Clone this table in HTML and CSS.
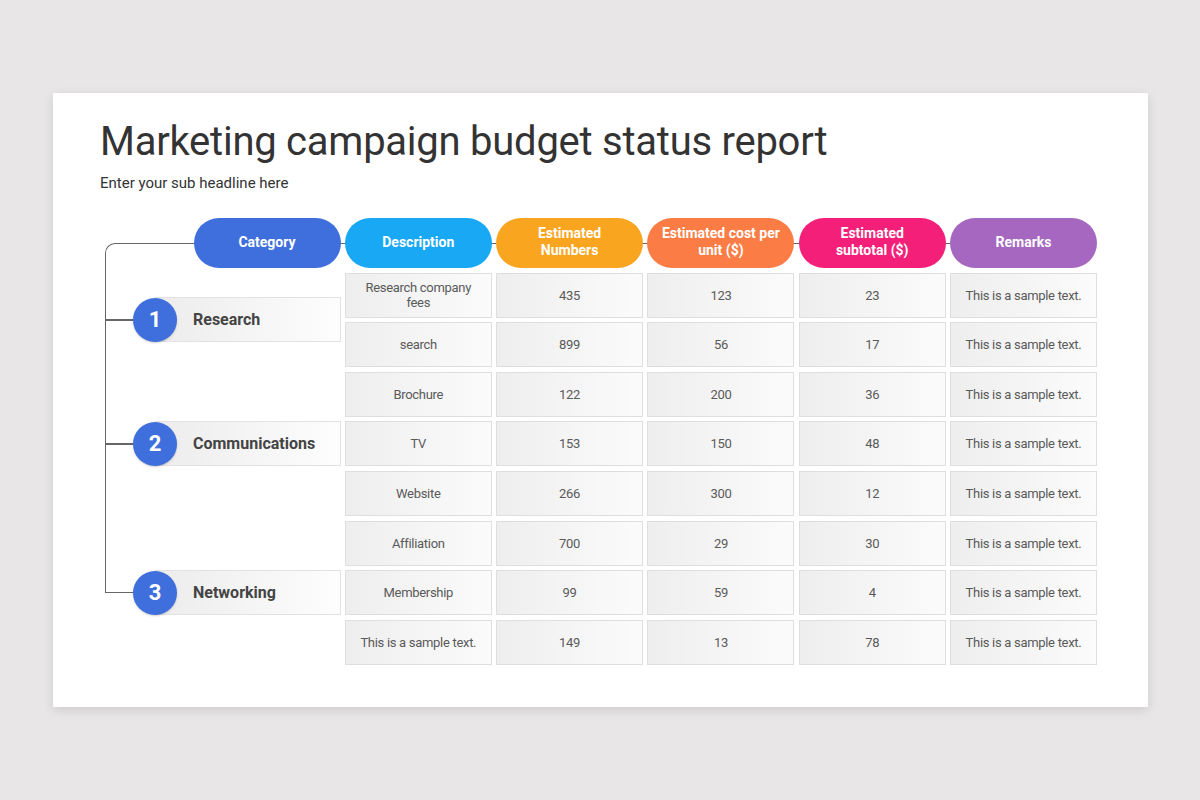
FILE: index.html
```html
<!DOCTYPE html>
<html>
<head>
<meta charset="utf-8">
<link rel="stylesheet" href="styles.css">
</head>
<body>
<div class="slide">
  <h1 class="title">Marketing campaign budget status report</h1>
  <p class="sub">Enter your sub headline here</p>
  <div class="board">
    <div class="bracket"></div>
    <div class="pill cat-pill c1">Category</div>
    <div class="pill c2">Description</div>
    <div class="pill c3">Estimated<br>Numbers</div>
    <div class="pill c4">Estimated cost per<br>unit ($)</div>
    <div class="pill c5">Estimated<br>subtotal ($)</div>
    <div class="pill c6">Remarks</div>

    <div class="cat r-research"><span class="num">1</span><span class="cat-box">Research</span></div>
    <div class="cat r-comm"><span class="num">2</span><span class="cat-box">Communications</span></div>
    <div class="cat r-net"><span class="num">3</span><span class="cat-box">Networking</span></div>

    <div class="cell d r1">Research company<br>fees</div><div class="cell r1">435</div><div class="cell r1">123</div><div class="cell r1">23</div><div class="cell r1">This is a sample text.</div>
    <div class="cell d r2">search</div><div class="cell r2">899</div><div class="cell r2">56</div><div class="cell r2">17</div><div class="cell r2">This is a sample text.</div>
    <div class="cell d r3">Brochure</div><div class="cell r3">122</div><div class="cell r3">200</div><div class="cell r3">36</div><div class="cell r3">This is a sample text.</div>
    <div class="cell d r4">TV</div><div class="cell r4">153</div><div class="cell r4">150</div><div class="cell r4">48</div><div class="cell r4">This is a sample text.</div>
    <div class="cell d r5">Website</div><div class="cell r5">266</div><div class="cell r5">300</div><div class="cell r5">12</div><div class="cell r5">This is a sample text.</div>
    <div class="cell d r6">Affiliation</div><div class="cell r6">700</div><div class="cell r6">29</div><div class="cell r6">30</div><div class="cell r6">This is a sample text.</div>
    <div class="cell d r7">Membership</div><div class="cell r7">99</div><div class="cell r7">59</div><div class="cell r7">4</div><div class="cell r7">This is a sample text.</div>
    <div class="cell d r8">This is a sample text.</div><div class="cell r8">149</div><div class="cell r8">13</div><div class="cell r8">78</div><div class="cell r8">This is a sample text.</div>
  </div>
</div>
</body>
</html>
```

FILE: styles.css
```css
html, body {
  margin: 0;
  padding: 0;
}
body {
  background: #e8e6e7;
  font-family: Roboto, "Liberation Sans", sans-serif;
  width: 1200px;
  height: 800px;
  overflow: hidden;
}
.slide {
  box-sizing: border-box;
  margin: 93px 0 0 53px;
  width: 1095px;
  height: 614px;
  background: #ffffff;
  box-shadow: 0 3px 10px rgba(0, 0, 0, 0.12);
  padding: 25px 0 0 47px;
}
.title {
  margin: 0;
  font-size: 40px;
  line-height: 48px;
  font-weight: 400;
  letter-spacing: -0.25px;
  color: #333333;
}
.sub {
  margin: 7px 0 0 0;
  font-size: 15px;
  line-height: 20px;
  color: #333333;
}
.board {
  position: relative;
  margin-top: 25px;
  width: 997px;
  display: grid;
  grid-template-columns: 240.5px repeat(5, 147px);
  grid-template-rows: 50px repeat(8, 45px);
  column-gap: 4.3px;
  row-gap: 4.6px;
}
.board > * {
  position: relative;
}
.board > .bracket {
  position: absolute;
  left: 5px;
  top: 24.5px;
  width: 980px;
  height: 349px;
  border-left: 1.5px solid #666666;
  border-top: 1.5px solid #666666;
  border-top-left-radius: 10px;
  box-sizing: border-box;
}
.pill {
  grid-row: 1;
  box-sizing: border-box;
  padding-bottom: 2px;
  border-radius: 25px;
  color: #ffffff;
  font-weight: 700;
  font-size: 14px;
  line-height: 17px;
  display: flex;
  align-items: center;
  justify-content: center;
  text-align: center;
}
.cat-pill {
  grid-column: 1;
  width: 147px;
  justify-self: end;
}
.c1 { background: #3f6fdc; }
.c2 { background: #19a8f4; }
.c3 { background: #f9a520; }
.c4 { background: #fb7c45; }
.c5 { background: #f31f78; }
.c6 { background: #a567bf; }

.cat {
  grid-column: 1;
  align-self: center;
  display: flex;
  align-items: center;
  margin-left: 5px;
}
.cat::before {
  content: "";
  width: 28px;
  height: 1.5px;
  background: #666666;
  flex: none;
}
.r-research { grid-row: 2 / 4; }
.r-comm { grid-row: 4 / 7; }
.r-net { grid-row: 7 / 10; }
.num {
  position: relative;
  z-index: 1;
  flex: none;
  width: 44px;
  height: 44px;
  border-radius: 50%;
  background: #3f6fdc;
  color: #ffffff;
  font-weight: 700;
  font-size: 22px;
  display: flex;
  align-items: center;
  justify-content: center;
  box-shadow: 0 1px 2px rgba(0, 0, 0, 0.2);
}
.cat-box {
  flex: 1;
  box-sizing: border-box;
  height: 45px;
  margin-left: -22px;
  padding-left: 37px;
  border: 1.5px solid #e2e2e2;
  background: linear-gradient(to right, #ececec, #fdfdfd);
  display: flex;
  align-items: center;
  font-weight: 700;
  font-size: 16px;
  color: #444444;
}
.cell {
  box-sizing: border-box;
  border: 1.5px solid #dedede;
  background: linear-gradient(to right, #eeeeee, #fbfbfb);
  display: flex;
  align-items: center;
  justify-content: center;
  text-align: center;
  font-size: 13px;
  line-height: 15px;
  letter-spacing: -0.3px;
  color: #5a5a5a;
}
.r1 { grid-row: 2; }
.r2 { grid-row: 3; }
.r3 { grid-row: 4; }
.r4 { grid-row: 5; }
.r5 { grid-row: 6; }
.r6 { grid-row: 7; }
.r7 { grid-row: 8; }
.r8 { grid-row: 9; }
.d { grid-column: 2; }
```
